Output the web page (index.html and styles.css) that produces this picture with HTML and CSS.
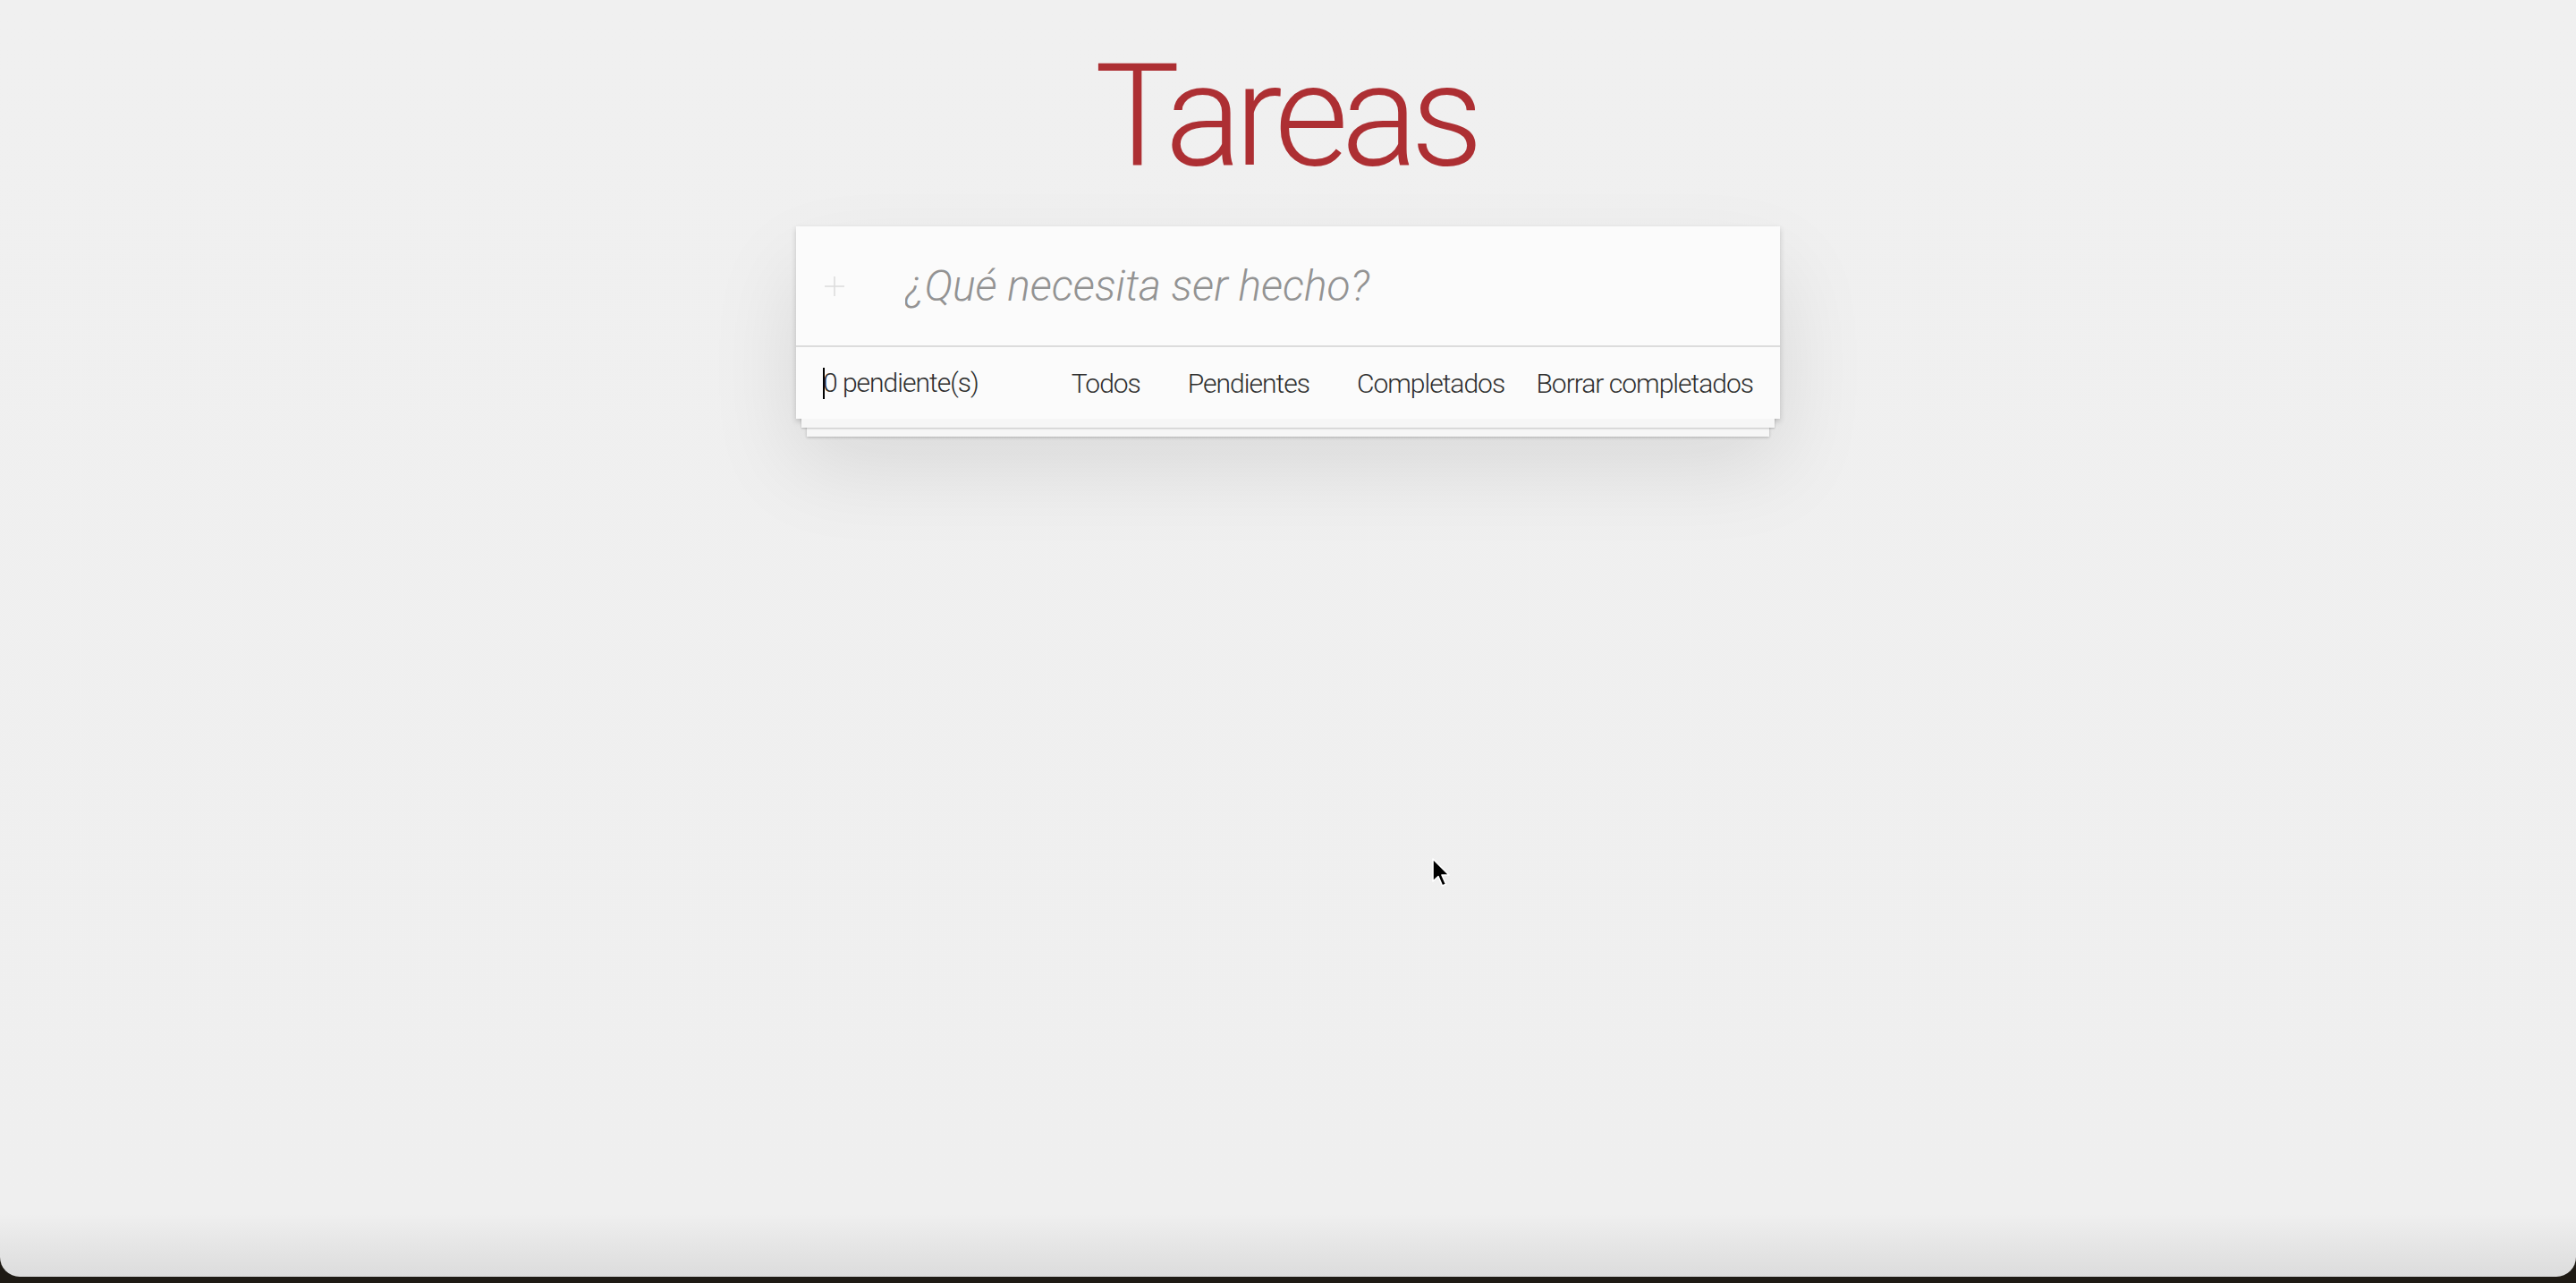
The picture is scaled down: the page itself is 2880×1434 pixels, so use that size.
FILE: index.html
```html
<!DOCTYPE html>
<html lang="es">
<head>
<meta charset="utf-8">
<title>Tareas</title>
<link rel="stylesheet" href="styles.css">
</head>
<body>
<div class="window">
  <h1 class="title">Tareas</h1>
  <section class="card">
    <div class="entry">
      <span class="plus">
        <svg width="22" height="22" viewBox="0 0 22 22"><path d="M11 0V22M0 11H22" stroke="#dcdcdc" stroke-width="1.5" fill="none"/></svg>
      </span>
      <input class="new-todo" type="text" placeholder="¿Qué necesita ser hecho?">
    </div>
    <footer class="footer">
      <span class="count"><span class="caret"></span>0 pendiente(s)</span>
      <ul class="filters">
        <li>Todos</li>
        <li>Pendientes</li>
        <li>Completados</li>
      </ul>
      <span class="clear">Borrar completados</span>
    </footer>
  </section>
  <svg class="pointer" width="22" height="34" viewBox="0 0 22 34"><path d="M2 1V26L8 20.5L12.5 31L16.5 29.3L12 19H20Z" fill="#000" stroke="#fff" stroke-width="1.6" stroke-linejoin="round"/></svg>
</div>
</body>
</html>
```
FILE: styles.css
```css
html, body {
  margin: 0;
  padding: 0;
}
body {
  background: #1e1a14;
  height: 1434px;
  overflow: hidden;
  font-family: Roboto, "Liberation Sans", sans-serif;
  font-weight: 300;
}
.window {
  position: relative;
  height: 1427px;
  border-radius: 0 0 22px 22px;
  background: linear-gradient(to bottom, #f0f0f0 0, #efefef calc(100% - 70px), #dcdcdc 100%);
  display: flex;
  flex-direction: column;
  align-items: center;
}
.title {
  margin: 50px 0 0;
  height: 160px;
  font-size: 160px;
  line-height: 160px;
  font-weight: 300;
  letter-spacing: -8px;
  text-indent: -6px;
  color: #ad2f33;
  text-align: center;
}
.card {
  margin-top: 43px;
  width: 1100px;
  background: #fbfbfb;
  box-shadow:
    0 16px 0 -6px #f6f6f6,
    0 17px 2px -6px rgba(0,0,0,0.22),
    0 32px 0 -12px #f6f6f6,
    0 33px 3px -12px rgba(0,0,0,0.22),
    0 3px 6px rgba(0,0,0,0.18),
    0 50px 100px rgba(0,0,0,0.1);
}
.entry {
  height: 133px;
  display: flex;
  align-items: center;
}
.plus {
  width: 86px;
  display: flex;
  justify-content: center;
  align-items: center;
}
.new-todo {
  flex: 1;
  border: 0;
  outline: 0;
  background: transparent;
  margin-left: 36px;
  padding: 0;
  font-family: Roboto, "Liberation Sans", sans-serif;
  font-weight: 300;
  font-style: italic;
  font-size: 48px;
  color: #333;
}
.new-todo::placeholder {
  color: #939393;
  font-style: italic;
  font-weight: 300;
}
.footer {
  border-top: 2px solid #dcdcdc;
  height: 80px;
  padding: 0 30px;
  display: grid;
  grid-template-columns: 1fr auto 1fr;
  align-items: center;
  font-size: 30px;
  letter-spacing: -1px;
  color: #2e2e2e;
}
.count {
  justify-self: start;
}
.caret {
  display: inline-block;
  width: 2px;
  height: 35px;
  background: #000;
  vertical-align: -8px;
  margin-right: -2px;
}
.filters {
  list-style: none;
  margin: 0;
  padding: 0;
  display: flex;
  gap: 53px;
}
.clear {
  justify-self: end;
}
.pointer {
  position: absolute;
  left: 1600px;
  top: 959px;
}
```
